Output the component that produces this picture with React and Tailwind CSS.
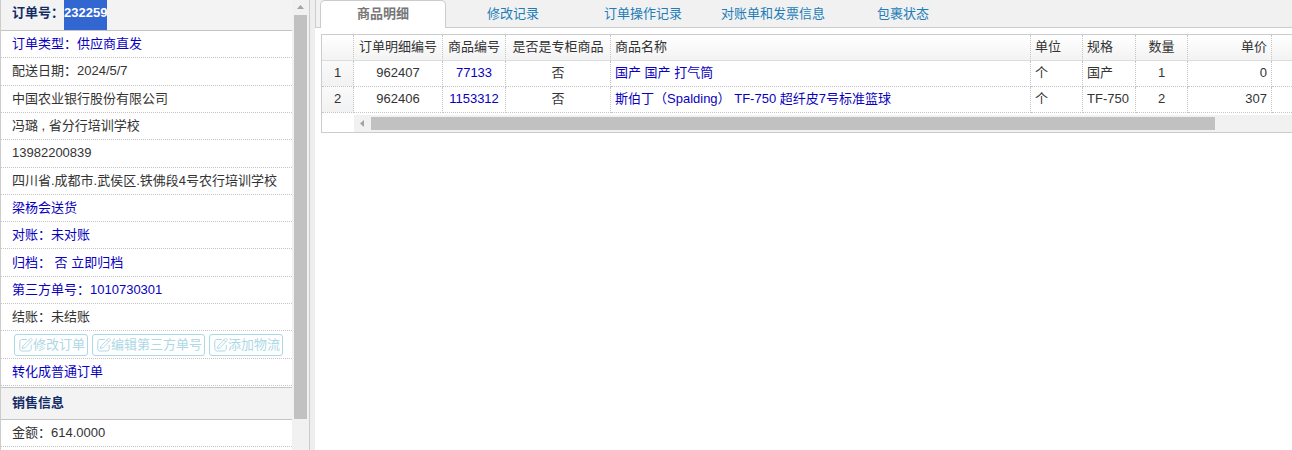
import React from "react";

const TABS = ["商品明细", "修改记录", "订单操作记录", "对账单和发票信息", "包裹状态"];

const ITEMS = [
  { id: "962407", code: "77133", counter: "否", name: "国产 国产 打气筒", unit: "个", spec: "国产", qty: 1, price: 0 },
  { id: "962406", code: "1153312", counter: "否", name: "斯伯丁（Spalding） TF-750 超纤皮7号标准篮球", unit: "个", spec: "TF-750", qty: 2, price: 307 },
];

const ROW = "flex items-center border-b border-dotted border-[#c4c4c4] pl-[11px] whitespace-nowrap";
const LINK = "text-[#0a00c0]";
const CELL = "border-r border-b border-dotted border-[#c4c4c4] px-1 pb-0.5";
const HEAD = "h-[26px] border-r border-dotted border-r-[#c4c4c4] px-1 pb-0.5 font-normal";

function EditIcon() {
  return (
    <svg viewBox="0 0 14 14" className="h-3.5 w-3.5" fill="none" stroke="currentColor" strokeLinejoin="round" strokeLinecap="round" aria-hidden="true">
      <path d="M7.500 1.500H3C1.700 1.500 .8 2.400 .8 3.600v7.300c0 1.200 .9 2.100 2.100 2.100h7.200c1.200 0 2.100-.9 2.100-2.100V7.200" />
      <path d="M4.300 7.700 10.800 1c.6-.6 1.300-.6 1.900-.1s.6 1.300 0 1.900L6.300 9.600l-2.700.9z" strokeWidth=".9" />
      <path d="M9.800 2l2 1.900" strokeWidth=".8" />
    </svg>
  );
}

function ActionButton({ children }) {
  return (
    <button type="button" className="flex h-[22px] items-center rounded-[3px] border border-[#add8e6] pr-0.5 pl-1 text-[#add8e6]">
      <EditIcon />
      {children}
    </button>
  );
}

function Sidebar() {
  return (
    <aside className="flex w-[310px] shrink-0 overflow-hidden border-x border-[#ccc] bg-white">
      <div className="min-w-0 flex-1 overflow-hidden">
        <h2 className="flex h-[31px] items-center border-b border-[#c4c4c4] bg-[#f3f3f3] pl-[11px] font-bold text-[#132c66]">
          <span className="pb-1">订单号：</span>
          <span className="flex h-full items-center bg-[#3267d1] pb-1 text-white">232259</span>
        </h2>
        <ul className="grid min-h-[355px] auto-rows-fr">
          <li className={ROW}><a href="#type" className={LINK}>订单类型：供应商直发</a></li>
          <li className={ROW}>配送日期：2024/5/7</li>
          <li className={ROW}>中国农业银行股份有限公司</li>
          <li className={ROW}>冯璐 , 省分行培训学校</li>
          <li className={ROW}>13982200839</li>
          <li className={ROW}>四川省.成都市.武侯区.铁佛段4号农行培训学校</li>
          <li className={ROW}><a href="#delivery" className={LINK}>梁杨会送货</a></li>
          <li className={ROW}><a href="#check" className={LINK}>对账：未对账</a></li>
          <li className={ROW}><a href="#archive" className={LINK}>归档： 否 立即归档</a></li>
          <li className={ROW}><a href="#third" className={LINK}>第三方单号：1010730301</a></li>
          <li className={ROW}>结账：未结账</li>
          <li className="flex items-center gap-1 border-b border-dotted border-[#c4c4c4] pl-[13px] whitespace-nowrap">
            <ActionButton>修改订单</ActionButton>
            <ActionButton>编辑第三方单号</ActionButton>
            <ActionButton>添加物流</ActionButton>
          </li>
          <li className={ROW}><a href="#convert" className={LINK}>转化成普通订单</a></li>
        </ul>
        <h2 className="mt-px flex h-[33px] items-center border-y border-[#c4c4c4] bg-[#f3f3f3] pb-0.5 pl-[11px] font-bold text-[#132c66]">
          销售信息
        </h2>
        <p className={`${ROW} h-[27px]`}>金额：614.0000</p>
      </div>
      <div className="flex w-[17px] shrink-0 flex-col items-center bg-[#f1f1f1]" aria-hidden="true">
        <svg viewBox="0 0 17 15" className="h-[15px] w-[17px] shrink-0" fill="#a3a3a3"><path d="M5 9h7L8.500 5z" /></svg>
        <div className="h-[404px] w-[13px] bg-[#c1c1c1]" />
      </div>
    </aside>
  );
}

function ItemTable() {
  return (
    <div className="mt-1.5 ml-1.5 border-y border-l border-[#ccc]">
      <table className="w-full table-fixed border-separate border-spacing-0 text-center whitespace-nowrap">
        <colgroup>
          <col className="w-8" />
          <col className="w-[89px]" />
          <col className="w-[63px]" />
          <col className="w-[105px]" />
          <col className="w-[420px]" />
          <col className="w-[52px]" />
          <col className="w-[53px]" />
          <col className="w-[52px]" />
          <col className="w-[84px]" />
          <col />
        </colgroup>
        <thead className="bg-linear-to-b from-white to-[#f2f2f2]">
          <tr className="[&>th]:border-b [&>th]:border-b-[#ddd] [&>th]:[border-bottom-style:solid]">
            <th className={HEAD} />
            <th className={HEAD}>订单明细编号</th>
            <th className={HEAD}>商品编号</th>
            <th className={HEAD}>是否是专柜商品</th>
            <th className={`${HEAD} text-left`}>商品名称</th>
            <th className={`${HEAD} text-left`}>单位</th>
            <th className={`${HEAD} text-left`}>规格</th>
            <th className={HEAD}>数量</th>
            <th className={`${HEAD} text-right`}>单价</th>
            <th />
          </tr>
        </thead>
        <tbody>
          {ITEMS.map((item, i) => (
            <tr key={item.id} className="h-[26px]">
              <td className={`${CELL} bg-linear-to-b from-[#fafafa] to-[#f2f2f2]`}>{i + 1}</td>
              <td className={CELL}>{item.id}</td>
              <td className={CELL}><a href="#item" className={LINK}>{item.code}</a></td>
              <td className={CELL}>{item.counter}</td>
              <td className={`${CELL} text-left`}><a href="#item" className={LINK}>{item.name}</a></td>
              <td className={`${CELL} text-left`}>{item.unit}</td>
              <td className={`${CELL} text-left`}>{item.spec}</td>
              <td className={CELL}>{item.qty}</td>
              <td className={`${CELL} text-right`}>{item.price}</td>
              <td className="border-b border-dotted border-[#c4c4c4]" />
            </tr>
          ))}
        </tbody>
      </table>
      <div className="mt-0.5 ml-8 flex h-[17px] items-center bg-[#f1f1f1]" aria-hidden="true">
        <svg viewBox="0 0 17 17" className="h-[17px] w-[17px] shrink-0" fill="#a3a3a3"><path d="M10 5v7L6 8.500z" /></svg>
        <div className="flex-1">
          <div className="h-[13px] w-11/12 bg-[#c1c1c1]" />
        </div>
      </div>
    </div>
  );
}

export default function App() {
  return (
    <div className="flex h-screen overflow-hidden bg-[#eee] font-['Liberation_Sans','Noto_Sans_CJK_SC',sans-serif] text-[13px] leading-5 text-[#333]">
      <Sidebar />
      <main className="ml-[5px] min-w-0 flex-1 bg-white">
        <nav className="flex h-7 gap-1 border-b border-l border-[#ccc] bg-[#f1f1f1] pl-1" role="tablist">
          {TABS.map((tab, i) => (
            <button
              key={tab}
              type="button"
              role="tab"
              aria-selected={i === 0}
              className={
                i === 0
                  ? "-mb-px w-[126px] rounded-t-[5px] border border-b-0 border-[#ccc] bg-white pb-0.5 font-bold text-[#777]"
                  : "w-[126px] text-[#1c7db8]"
              }
            >
              {tab}
            </button>
          ))}
        </nav>
        <ItemTable />
      </main>
    </div>
  );
}
